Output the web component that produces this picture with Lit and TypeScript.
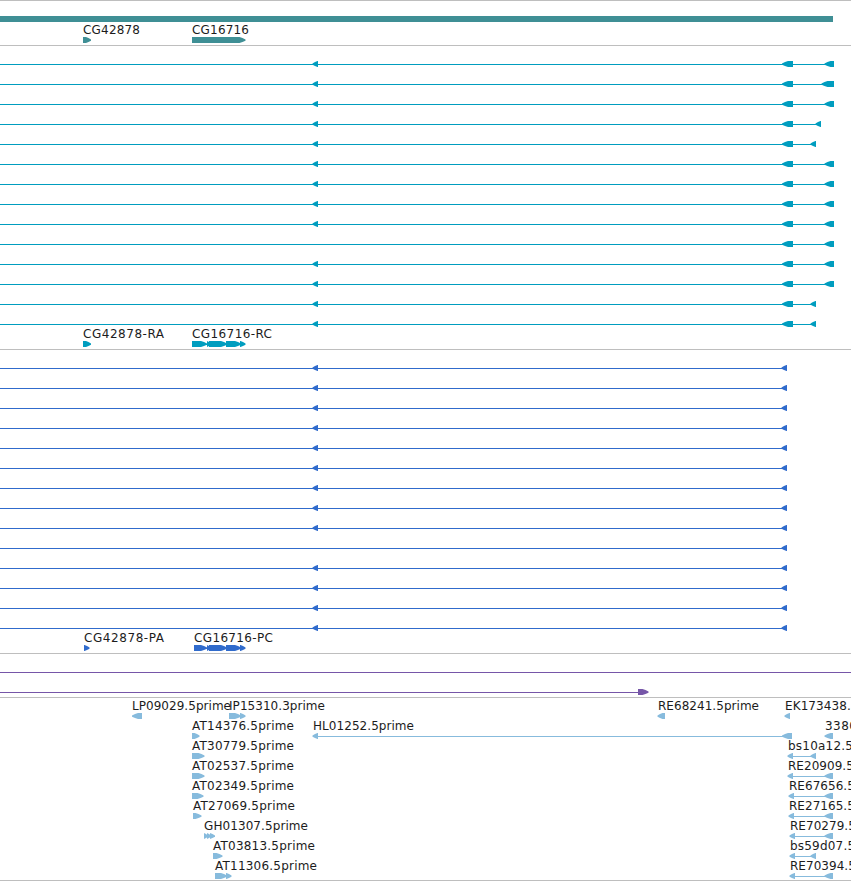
import { html, svg, css, LitElement, CSSResultArray } from 'lit';
import { property, customElement } from 'lit/decorators.js';

export type Strand = 'left' | 'right';
export type TrackKind = 'gene' | 'transcript' | 'cds' | 'aligned' | 'est';

interface Exon {
  from: number;
  to: number;
  strand?: Strand;
}

interface Feature {
  exons: Exon[];
  // Extent of the connector, when the exons are joined.
  line?: [number, number];
  label?: string;
  labelX?: number;
  labelWidth?: number;
}

type Lane = Feature[];

interface Track {
  kind: TrackKind;
  lanes: Lane[];
}

const viewWidth = 851;
const glyphTop = 14;

function left(from: number, to: number): Exon {
  return { from, to, strand: 'left' };
}

function right(from: number, to: number): Exon {
  return { from, to, strand: 'right' };
}

function labelled(label: string, labelX: number, labelWidth: number, exons: Exon[], line?: [number, number]): Feature {
  return { label, labelX, labelWidth, exons, line };
}

function transcriptLane(last: [number, number], middle = true): Lane {
  const exons = [left(782, 793), left(last[0], last[1])];
  if (middle) {
    exons.unshift(left(312.5, 318));
  }
  return [{ exons, line: [0, last[1]] }];
}

function cdsLane(middle = true): Lane {
  const exons = [left(781.5, 787)];
  if (middle) {
    exons.unshift(left(312.5, 318));
  }
  return [{ exons, line: [0, 787] }];
}

const tail = (from: number): Exon[] => [
  right(from, 207),
  right(207, 211),
  right(209, 227),
  right(226, 241),
  right(240, 245.5),
];

const tracks: Track[] = [
  {
    kind: 'gene',
    lanes: [
      [{ exons: [{ from: 0, to: 833 }] }],
      [
        labelled('CG42878', 83, 57, [right(83, 91)]),
        labelled('CG16716', 192, 57, [right(192, 245.5)]),
      ],
    ],
  },
  {
    kind: 'transcript',
    lanes: [
      transcriptLane([824.5, 834]),
      transcriptLane([821.5, 834]),
      transcriptLane([824.5, 834]),
      transcriptLane([815.5, 821]),
      transcriptLane([810.5, 816]),
      transcriptLane([824.5, 834]),
      transcriptLane([824.5, 834]),
      transcriptLane([824.5, 834]),
      transcriptLane([824.5, 834]),
      transcriptLane([824.5, 834], false),
      transcriptLane([824.5, 834]),
      transcriptLane([824.5, 834]),
      transcriptLane([810.5, 816]),
      transcriptLane([810.5, 816]),
      [
        labelled('CG42878-RA', 83, 81, [right(83, 91)]),
        labelled('CG16716-RC', 192, 80, tail(192), [192, 245]),
      ],
    ],
  },
  {
    kind: 'cds',
    lanes: [
      ...Array.from({ length: 14 }, (_, i) => cdsLane(i !== 9)),
      [
        labelled('CG42878-PA', 84, 80, [right(84, 89.5)]),
        labelled('CG16716-PC', 194, 79, tail(194), [194, 245]),
      ],
    ],
  },
  {
    kind: 'aligned',
    lanes: [
      [{ exons: [], line: [0, viewWidth] }],
      [{ exons: [right(638, 648.5)], line: [0, 648] }],
    ],
  },
  {
    kind: 'est',
    lanes: [
      [
        labelled('LP09029.5prime', 132, 99, [left(132, 142)]),
        labelled('IP15310.3prime', 229, 96, [right(229, 241), right(240, 245.5)], [229, 245]),
        labelled('RE68241.5prime', 658, 101, [left(657.5, 665)]),
        labelled('EK173438.5prime', 785, 109, [left(784.5, 790)]),
      ],
      [
        labelled('AT14376.5prime', 192, 102, [right(192, 199.5)]),
        labelled('HL01252.5prime', 313, 101, [left(312.5, 318), left(782, 792)], [313, 792]),
        labelled('3380', 825, 32, [left(824.5, 833)]),
      ],
      [
        labelled('AT30779.5prime', 192, 102, [right(192, 204.5)]),
        labelled('bs10a12.5prime', 788, 101, [left(787.5, 793), left(810.5, 816)], [788, 816]),
      ],
      [
        labelled('AT02537.5prime', 192, 102, [right(192, 204.5)]),
        labelled('RE20909.5prime', 788, 101, [left(787.5, 793), left(824.5, 833)], [788, 833]),
      ],
      [
        labelled('AT02349.5prime', 192, 102, [right(192, 203.5)]),
        labelled('RE67656.5prime', 789, 101, [left(788.5, 794), left(824.5, 833)], [789, 833]),
      ],
      [
        labelled('AT27069.5prime', 193, 102, [right(193, 201.5)]),
        labelled('RE27165.5prime', 789, 101, [left(788.5, 794), left(824.5, 833)], [789, 833]),
      ],
      [
        labelled('GH01307.5prime', 204, 104, [right(204, 208), right(207, 211), right(210, 215)], [204, 215]),
        labelled('RE70279.5prime', 790, 101, [left(789.5, 795), left(824.5, 833)], [790, 833]),
      ],
      [
        labelled('AT03813.5prime', 213, 102, [right(213, 222.5)]),
        labelled('bs59d07.5prime', 790, 101, [left(789.5, 795), left(810.5, 816)], [790, 816]),
      ],
      [
        labelled('AT11306.5prime', 215, 102, [right(215, 227), right(226, 231.5)], [215, 231]),
        labelled('RE70394.5prime', 790, 101, [left(789.5, 795), left(824.5, 833)], [790, 833]),
      ],
    ],
  },
];

@customElement('feature-lane')
export class FeatureLane extends LitElement {
  static get styles(): CSSResultArray {
    return [
      css`
        :host {
          display: block;
          height: 20px;
        }
        .lane {
          display: block;
          overflow: hidden;
        }
        .shape {
          fill: var(--track-color);
        }
        .line {
          fill: var(--track-color);
          shape-rendering: crispEdges;
        }
        .label {
          fill: #1c1c1c;
          font-family: 'DejaVu Sans', sans-serif;
          font-size: 12px;
        }
      `,
    ];
  }

  @property({ attribute: false }) features: Lane = [];

  render() {
    return html`
      <svg class="lane" width=${viewWidth} height="20" viewBox="0 0 ${viewWidth} 20">
        ${this.features.map((f) => this.renderFeature(f))}
      </svg>
    `;
  }

  private renderFeature(f: Feature) {
    return svg`
      ${f.line
        ? svg`<rect class="line" x=${f.line[0]} y=${glyphTop + 3} width=${f.line[1] - f.line[0]} height="1"></rect>`
        : ''}
      ${f.exons.map((e) => svg`<polygon class="shape" points=${this.exonPoints(e)}></polygon>`)}
      ${f.label
        ? svg`<text class="label" x=${f.labelX ?? 0} y="11" textLength=${f.labelWidth ?? 0}>${f.label}</text>`
        : ''}
    `;
  }

  // The head is slightly rounded and at most 6px long; short exons are all head.
  private exonPoints(e: Exon) {
    const top = glyphTop;
    const bottom = glyphTop + 6;
    if (!e.strand) {
      return `${e.from},${top} ${e.to},${top} ${e.to},${bottom} ${e.from},${bottom}`;
    }
    const width = e.to - e.from;
    const head = Math.min(width > 8 ? 6 : 5, width);
    const tip = e.strand === 'left' ? e.from : e.to;
    const back = e.strand === 'left' ? e.to : e.from;
    const dir = e.strand === 'left' ? 1 : -1;
    const points = [
      [tip, top + 2.6],
      [tip + dir * head * 0.5, top + 0.9],
      [tip + dir * head, top],
      [back, top],
      [back, bottom],
      [tip + dir * head, bottom],
      [tip + dir * head * 0.5, bottom - 0.9],
      [tip, bottom - 2.2],
    ];
    return points.map((p) => p.join(',')).join(' ');
  }
}

@customElement('app-root')
export class AppRoot extends LitElement {
  static get styles(): CSSResultArray {
    return [
      css`
        :host {
          display: flex;
          flex-direction: column;
          width: 851px;
          height: 881px;
          box-sizing: border-box;
          overflow: hidden;
          background: #fff;
          border-bottom: 1px solid #bebebe;
        }
        .track {
          display: flex;
          flex-direction: column;
          border-top: 1px solid #bebebe;
          padding: 1px 0 2px;
        }
        .gene {
          --track-color: #3f8f95;
          gap: 1px;
        }
        .transcript {
          --track-color: #009dbf;
        }
        .cds {
          --track-color: #306bcc;
        }
        .aligned {
          --track-color: #7656a8;
        }
        .est {
          --track-color: #87bbdd;
          padding-bottom: 1px;
        }
      `,
    ];
  }

  render() {
    return tracks.map(
      (track) => html`
        <section class="track ${track.kind}">
          ${track.lanes.map((lane) => html`<feature-lane .features=${lane}></feature-lane>`)}
        </section>
      `,
    );
  }
}

export default AppRoot;

declare global {
  interface HTMLElementTagNameMap {
    'app-root': AppRoot;
    'feature-lane': FeatureLane;
  }
}
